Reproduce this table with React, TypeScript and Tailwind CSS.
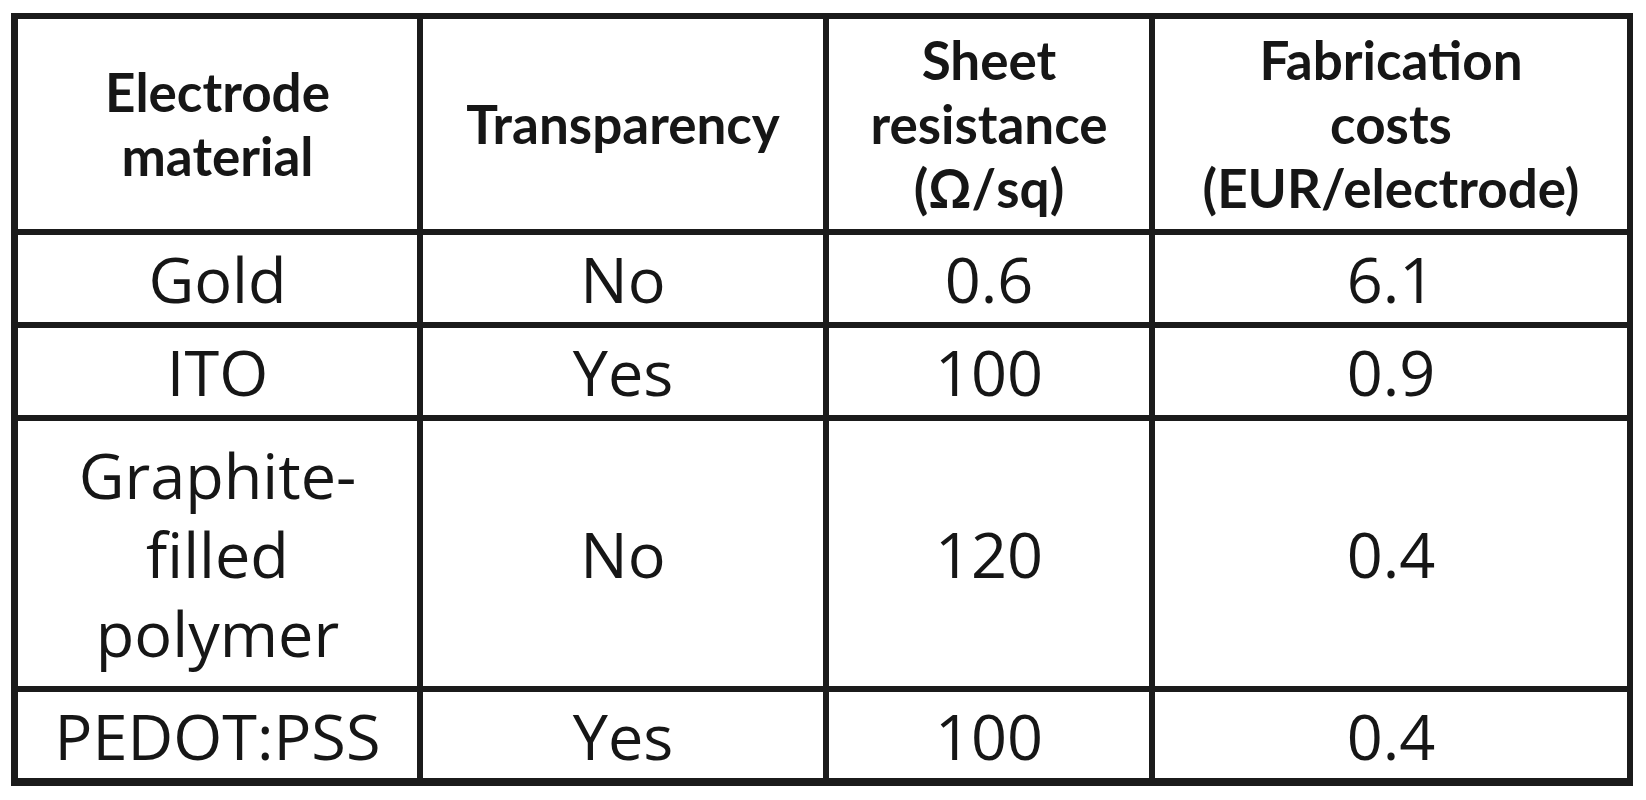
import React from "react";

const head = "flex flex-col items-center justify-center bg-white text-center text-[#161616] font-bold text-[53px] leading-[64px] [font-family:Lato,'Liberation_Sans',sans-serif]";
const cell = "flex flex-col items-center justify-center bg-white text-center text-[#161616] text-[63px] leading-[79px] [font-family:'Open_Sans','Noto_Sans',sans-serif]";

const rows: string[][] = [
  ["Gold", "No", "0.6", "6.1"],
  ["ITO", "Yes", "100", "0.9"],
  ["Graphite-|filled|polymer", "No", "120", "0.4"],
  ["PEDOT:PSS", "Yes", "100", "0.4"],
];

export default function App() {
  return (
    <div className="min-h-[800px] w-[1646px] bg-white pl-[11px] pt-[13px]">
      <div className="grid w-fit grid-cols-[399px_400px_320px_472px] grid-rows-[210px_87px_87px_265px_86px] gap-[6px] bg-[#1b1b1b] pb-[8px] pl-[7px] pr-[6px] pt-[6px]">
        <div className={head}>
          <span>Electrode</span>
          <span>material</span>
        </div>
        <div className={head}>
          <span>Transparency</span>
        </div>
        <div className={head}>
          <span>Sheet</span>
          <span>resistance</span>
          <span>(Ω/sq)</span>
        </div>
        <div className={head}>
          <span>Fabrication</span>
          <span>costs</span>
          <span>(EUR/electrode)</span>
        </div>
        {rows.map((r, i) =>
          r.map((c, j) => (
            <div key={i + "-" + j} className={cell}>
              {c.split("|").map((t, k) => (
                <span key={k}>{t}</span>
              ))}
            </div>
          ))
        )}
      </div>
    </div>
  );
}
